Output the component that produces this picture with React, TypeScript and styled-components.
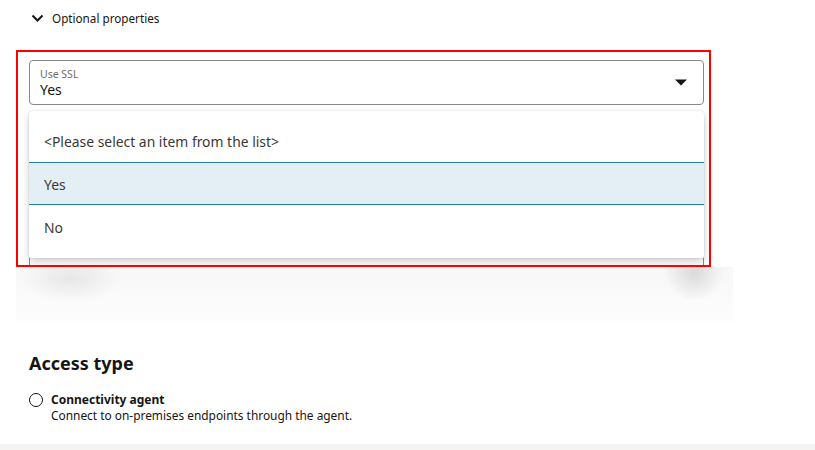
import React from "react";
import styled, { createGlobalStyle } from "styled-components";

const Global = createGlobalStyle`
  html, body { margin: 0; padding: 0; background: #ffffff; }
  body { font-family: "Noto Sans", "Open Sans", sans-serif; color: #161513; }
  #root { width: 815px; height: 450px; overflow: hidden; }
`;

const Page = styled.div`
  position: relative;
  width: 815px;
  height: 450px;
  display: flex;
  flex-direction: column;
  background: #fff;
`;

const Collapsible = styled.div`
  display: flex;
  align-items: center;
  gap: 8px;
  padding: 9px 0 0 31px;
  height: 18px;
  font-size: 11.7px;
  color: #161513;
`;

const Section = styled.div`
  position: relative;
  margin-top: 33px;
  padding: 0 0 0 29px;
  width: 675px;
`;

const Highlight = styled.div`
  position: absolute;
  left: 16px;
  top: -10px;
  width: 691px;
  height: 213px;
  border: 2px solid #ff0000;
  pointer-events: none;
  z-index: 5;
`;

const SelectField = styled.div`
  box-sizing: border-box;
  height: 45px;
  border: 1px solid #8a8886;
  border-radius: 4px;
  display: flex;
  align-items: center;
  padding: 0 16px 0 10px;
  background: #fff;
`;

const FieldText = styled.div`
  flex: 1;
  display: flex;
  flex-direction: column;
  padding-top: 2px;
`;

const FieldLabel = styled.span`
  font-size: 10.5px;
  line-height: 13px;
  color: #6f6c69;
`;

const FieldValue = styled.span`
  font-size: 14px;
  line-height: 18px;
  color: #161513;
`;

const Popup = styled.div`
  position: relative;
  z-index: 2;
  margin-top: 6px;
  background: #fff;
  border-radius: 4px;
  box-shadow: 0 0 2px rgba(0, 0, 0, 0.15), 0 4px 8px rgba(0, 0, 0, 0.18);
  padding: 8px 0 10px;
`;

const Option = styled.div<{ $selected?: boolean }>`
  box-sizing: border-box;
  height: 43px;
  display: flex;
  align-items: center;
  padding: 1px 15px 0;
  font-size: 13.9px;
  color: #3b3835;
  background: ${(p) => (p.$selected ? "#e4eff5" : "#fff")};
  border-top: 1px solid ${(p) => (p.$selected ? "#227e9e" : "transparent")};
  border-bottom: 1px solid ${(p) => (p.$selected ? "#227e9e" : "transparent")};
`;

const Peek = styled.div`
  box-sizing: border-box;
  height: 9px;
  border-left: 1px solid #8a8886;
  border-right: 1px solid #8a8886;
`;

const Haze = styled.div`
  height: 55px;
  margin-left: -13px;
  width: 717px;
  background:
    radial-gradient(ellipse 50px 24px at 55px 12px, rgba(0,0,0,0.07), rgba(0,0,0,0) 100%),
    radial-gradient(ellipse 30px 28px at 678px 6px, rgba(0,0,0,0.12), rgba(0,0,0,0) 100%),
    linear-gradient(#f7f7f7, #fdfdfd);
`;

const Heading = styled.h2`
  margin: 29px 0 0 29px;
  font-size: 18px;
  line-height: 24px;
  font-weight: 700;
  color: #161513;
`;

const RadioRow = styled.div`
  display: flex;
  align-items: flex-start;
  gap: 8px;
  margin: 16px 0 0 29px;
`;

const RadioCircle = styled.span`
  box-sizing: border-box;
  width: 14px;
  height: 14px;
  border-radius: 50%;
  border: 1.5px solid #161513;
  margin-top: 2px;
  flex: none;
`;

const RadioText = styled.div`
  display: flex;
  flex-direction: column;
`;

const RadioTitle = styled.span`
  font-size: 12px;
  line-height: 17px;
  font-weight: 700;
  color: #161513;
`;

const RadioDesc = styled.span`
  font-size: 11.9px;
  line-height: 14px;
  color: #161513;
`;

const BottomBand = styled.div`
  margin-top: auto;
  height: 6px;
  background: #f5f4f2;
`;

export default function App() {
  return (
    <Page>
      <Global />
      <Collapsible>
        <svg width="13" height="8" viewBox="0 0 13 8">
          <polyline points="1.5,1.5 6.5,6.5 11.5,1.5" fill="none" stroke="#161513" strokeWidth="2" />
        </svg>
        <span>Optional properties</span>
      </Collapsible>
      <Section>
        <Highlight />
        <SelectField>
          <FieldText>
            <FieldLabel>Use SSL</FieldLabel>
            <FieldValue>Yes</FieldValue>
          </FieldText>
          <svg width="12" height="7" viewBox="0 0 12 7">
            <polygon points="0,0.5 12,0.5 6,6.5" fill="#161513" />
          </svg>
        </SelectField>
        <Popup>
          <Option>&lt;Please select an item from the list&gt;</Option>
          <Option $selected>Yes</Option>
          <Option>No</Option>
        </Popup>
        <Peek />
        <Haze />
      </Section>
      <Heading>Access type</Heading>
      <RadioRow>
        <RadioCircle />
        <RadioText>
          <RadioTitle>Connectivity agent</RadioTitle>
          <RadioDesc>Connect to on-premises endpoints through the agent.</RadioDesc>
        </RadioText>
      </RadioRow>
      <BottomBand />
    </Page>
  );
}
